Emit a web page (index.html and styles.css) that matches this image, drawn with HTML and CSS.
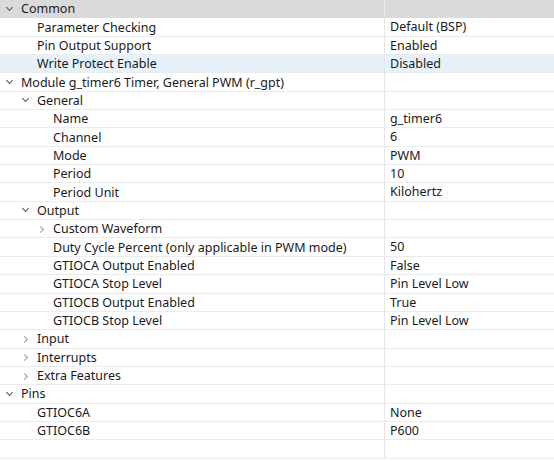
FILE: index.html
```html
<!DOCTYPE html>
<html lang="en">
<head>
    <meta charset="UTF-8">
    <title>Properties</title>
    <link rel="stylesheet" href="styles.css">
</head>
<body>

    <div class="tree">
        <div class="row head lvl0"><div class="key"><span class="tw open"></span>Common</div><div class="val"></div></div>
        <div class="row lvl1"><div class="key"><span class="tw"></span>Parameter Checking</div><div class="val">Default (BSP)</div></div>
        <div class="row lvl1"><div class="key"><span class="tw"></span>Pin Output Support</div><div class="val">Enabled</div></div>
        <div class="row lvl1 selected"><div class="key"><span class="tw"></span>Write Protect Enable</div><div class="val">Disabled</div></div>
        <div class="row lvl0"><div class="key"><span class="tw open"></span>Module g_timer6 Timer, General PWM (r_gpt)</div><div class="val"></div></div>
        <div class="row lvl1"><div class="key"><span class="tw open"></span>General</div><div class="val"></div></div>
        <div class="row lvl2"><div class="key"><span class="tw"></span>Name</div><div class="val">g_timer6</div></div>
        <div class="row lvl2"><div class="key"><span class="tw"></span>Channel</div><div class="val">6</div></div>
        <div class="row lvl2"><div class="key"><span class="tw"></span>Mode</div><div class="val">PWM</div></div>
        <div class="row lvl2"><div class="key"><span class="tw"></span>Period</div><div class="val">10</div></div>
        <div class="row lvl2"><div class="key"><span class="tw"></span>Period Unit</div><div class="val">Kilohertz</div></div>
        <div class="row lvl1"><div class="key"><span class="tw open"></span>Output</div><div class="val"></div></div>
        <div class="row lvl2"><div class="key"><span class="tw closed"></span>Custom Waveform</div><div class="val"></div></div>
        <div class="row lvl2"><div class="key"><span class="tw"></span>Duty Cycle Percent (only applicable in PWM mode)</div><div class="val">50</div></div>
        <div class="row lvl2"><div class="key"><span class="tw"></span>GTIOCA Output Enabled</div><div class="val">False</div></div>
        <div class="row lvl2"><div class="key"><span class="tw"></span>GTIOCA Stop Level</div><div class="val">Pin Level Low</div></div>
        <div class="row lvl2"><div class="key"><span class="tw"></span>GTIOCB Output Enabled</div><div class="val">True</div></div>
        <div class="row lvl2"><div class="key"><span class="tw"></span>GTIOCB Stop Level</div><div class="val">Pin Level Low</div></div>
        <div class="row lvl1"><div class="key"><span class="tw closed"></span>Input</div><div class="val"></div></div>
        <div class="row lvl1"><div class="key"><span class="tw closed"></span>Interrupts</div><div class="val"></div></div>
        <div class="row lvl1"><div class="key"><span class="tw closed"></span>Extra Features</div><div class="val"></div></div>
        <div class="row lvl0"><div class="key"><span class="tw open"></span>Pins</div><div class="val"></div></div>
        <div class="row lvl1"><div class="key"><span class="tw"></span>GTIOC6A</div><div class="val">None</div></div>
        <div class="row lvl1"><div class="key"><span class="tw"></span>GTIOC6B</div><div class="val">P600</div></div>
        <div class="row"><div class="key"></div><div class="val"></div></div>
    </div>

</body>
</html>
```

FILE: styles.css
```css
body {
    margin: 0;
    background-color: #fff;
    font-family: "Noto Sans", "Open Sans", sans-serif;
    font-size: 12.5px;
    color: #1a1a1a;
}
.tree {
    width: 554px;
    height: 461px;
    overflow: hidden;
}
.row {
    display: grid;
    grid-template-columns: 385px 1fr;
    height: 18.35px;
    box-sizing: border-box;
    border-bottom: 1px solid #ececec;
    line-height: 17px;
    white-space: nowrap;
}
.key {
    display: flex;
    align-items: center;
    border-right: 1px solid #e6e6e6;
    overflow: hidden;
}
.val {
    padding-left: 5px;
}
.lvl0 .key { padding-left: 4px; }
.lvl1 .key { padding-left: 20px; }
.lvl2 .key { padding-left: 36px; }
.tw {
    flex: none;
    width: 13px;
    height: 12px;
    margin-right: 4px;
    position: relative;
}
.tw.open::before,
.tw.closed::before {
    content: "";
    position: absolute;
    width: 4px;
    height: 4px;
    border-right: 1px solid #555;
    border-bottom: 1px solid #555;
}
.tw.open::before {
    left: 3px;
    top: 2px;
    transform: rotate(45deg);
}
.tw.closed::before {
    left: 2px;
    top: 4px;
    border-color: #9a9a9a;
    transform: rotate(-45deg);
}
.head {
    background-color: #dadada;
    border-bottom-color: #dadada;
}
.head .key {
    border-right-color: #ececec;
}
.selected {
    background-color: #e5f1fb;
}
```
